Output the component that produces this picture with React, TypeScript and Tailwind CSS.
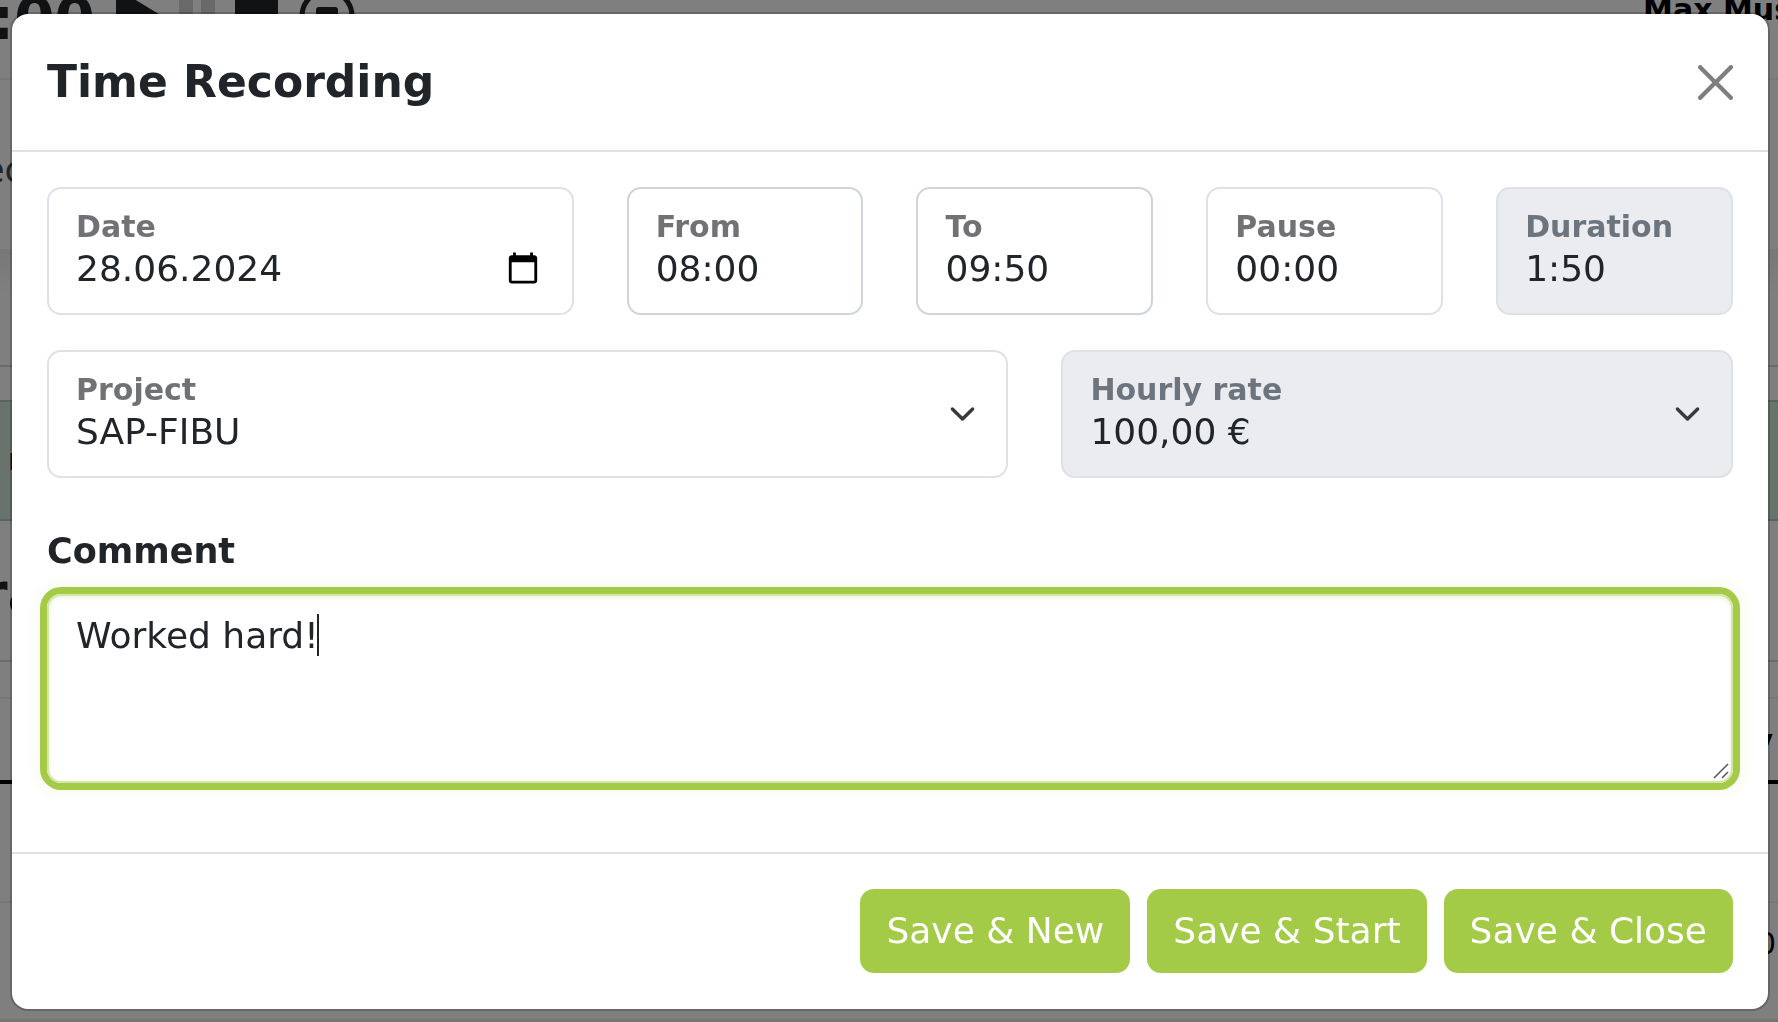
function CloseIcon() {
  return (
    <svg viewBox="0 0 16 16" className="size-[35px] fill-black opacity-50" aria-hidden="true">
      <path d="M.293.293a1 1 0 0 1 1.414 0L8 6.586 14.293.293a1 1 0 1 1 1.414 1.414L9.414 8l6.293 6.293a1 1 0 0 1-1.414 1.414L8 9.414l-6.293 6.293a1 1 0 0 1-1.414-1.414L6.586 8 .293 1.707a1 1 0 0 1 0-1.414z" />
    </svg>
  );
}

function CalendarIcon() {
  return (
    <svg viewBox="0 0 24 24" className="size-[34px] fill-black" aria-hidden="true">
      <path d="M20 3h-1V1h-2v2H7V1H5v2H4c-1.1 0-2 .9-2 2v16c0 1.1.9 2 2 2h16c1.1 0 2-.9 2-2V5c0-1.1-.9-2-2-2zm0 18H4V8h16v13z" />
    </svg>
  );
}

function Chevron() {
  return (
    <svg viewBox="0 0 16 16" className="pointer-events-none absolute top-1/2 right-[30px] size-[27px] -translate-y-1/2" aria-hidden="true">
      <path d="m2 5 6 6 6-6" fill="none" stroke="#343a40" strokeWidth="2" strokeLinecap="round" strokeLinejoin="round" />
    </svg>
  );
}

function TimerControls() {
  return (
    <svg viewBox="0 0 240 56" className="-mt-3 ml-[21px] h-14 w-[240px] shrink-0" aria-hidden="true">
      <path d="M0 0 46 28 0 56z" fill="#212529" />
      <path d="M63 0h14v56H63zM85 0h14v56H85z" fill="#d2d2d2" />
      <rect x="119" y="6" width="43" height="44" rx="6" fill="#212529" />
      <circle cx="211" cy="28" r="25" fill="none" stroke="#212529" strokeWidth="5" />
      <rect x="200" y="19" width="22" height="20" rx="3" fill="#212529" />
    </svg>
  );
}

/* The timesheet page that lies behind the dialog. */
function Timesheet() {
  return (
    <div className="h-screen overflow-hidden bg-white text-[#212529]" aria-hidden="true">
      <div className="flex h-20 items-start border-b-2 border-[#f0f0f0]">
        <span className="-mt-[15px] -ml-[9px] text-[58px] leading-[68px] font-bold">:00</span>
        <TimerControls />
        <span className="-mt-[10px] -mr-[14px] ml-auto text-[30px] leading-10 font-bold whitespace-nowrap text-black">Max Mus</span>
      </div>
      <div className="h-[169px] pt-[68px]">
        <div className="-ml-[17px] text-[35px] leading-[44px] text-[#404a54]">ec</div>
      </div>
      <div className="h-[118px] border-b-2 border-[#d6d6d6] bg-linear-to-b from-[#f0f0f0] to-white to-40%" />
      <div className="mt-[33px] h-[121px] border-y-2 border-[#a3cfbb] bg-[#d1e7dd] pt-[38px]">
        <div className="ml-2 text-[30px] leading-10 font-bold">m</div>
      </div>
      <div className="h-[141px] border-b-2 border-[#d6d6d6] pt-10">
        <div className="-ml-5 text-[56px] leading-[64px] font-bold">ra</div>
      </div>
      <div className="h-[37px] border-b-2 border-[#f0f0f0]" />
      <div className="h-[85px] border-b-4 border-black pt-[22px] pr-[5px] text-right text-[30px] leading-10 font-bold text-black">y</div>
      <div className="h-[119px] border-b-2 border-[#eeeeee]" />
      <div className="h-[119px] border-b-3 border-[#eaeaea] pt-[21px] pr-[2px] text-right text-[30px] leading-10 text-black">0</div>
    </div>
  );
}

type Kind = "plain" | "strong" | "muted";

const boxes: Record<Kind, string> = {
  plain: "border-[#dee2e6] bg-white",
  strong: "border-[#ced4da] bg-white",
  muted: "border-[#dee2e6] bg-[#eaecf0]",
};

const controlClass = "block w-full min-w-0 appearance-none bg-transparent px-[27px] pt-[58px] pb-[22px] text-[36px] leading-[44px] text-[#212529] outline-none";

function Field(props: { id: string; label: string; value: string; span: string; kind: Kind; select?: boolean; calendar?: boolean }) {
  const { id, label, value, span, kind, select, calendar } = props;
  return (
    <div className={`relative rounded-[14px] border-2 ${boxes[kind]} ${span}`}>
      <label htmlFor={id} className={`absolute top-5 left-[27px] text-[30px] leading-9 font-bold ${kind === "muted" ? "text-[#6c757d]" : "text-[#717275]"}`}>
        {label}
      </label>
      {select ? (
        <select id={id} defaultValue={value} className={controlClass}>
          <option>{value}</option>
        </select>
      ) : (
        <input id={id} type="text" defaultValue={value} readOnly={kind === "muted"} className={controlClass} />
      )}
      {select && <Chevron />}
      {calendar && (
        <button type="button" aria-label="Choose date" className="absolute right-8 bottom-7">
          <CalendarIcon />
        </button>
      )}
    </div>
  );
}

function SaveButton({ children }: { children: string }) {
  return (
    <button type="button" className="rounded-[14px] bg-[#a3cb48] px-[26px] py-5 text-[36px] leading-[44px] text-white">
      {children}
    </button>
  );
}

export default function App() {
  return (
    <div className="font-['Verdana','DejaVu_Sans',sans-serif]">
      <Timesheet />
      <div className="fixed inset-0 flex overflow-auto bg-black/50 pt-3 pr-2 pb-[11px] pl-[10px]">
        <div role="dialog" aria-label="Time Recording" className="flex w-full flex-col rounded-[18px] border-2 border-black/20 bg-white bg-clip-padding">
          <header className="flex items-center justify-between border-b-2 border-[#dee2e6] px-[35px] pt-9 pb-9">
            <h1 className="text-[44px] leading-[64px] font-bold text-[#212529]">Time Recording</h1>
            <button type="button" aria-label="Close">
              <CloseIcon />
            </button>
          </header>
          <div className="grid grid-cols-12 gap-x-[53px] gap-y-[35px] px-[35px] pt-[35px]">
            <Field id="date" label="Date" value="28.06.2024" span="col-span-4" kind="plain" calendar />
            <Field id="from" label="From" value="08:00" span="col-span-2" kind="strong" />
            <Field id="to" label="To" value="09:50" span="col-span-2" kind="strong" />
            <Field id="pause" label="Pause" value="00:00" span="col-span-2" kind="plain" />
            <Field id="duration" label="Duration" value="1:50" span="col-span-2" kind="muted" />
            <Field id="project" label="Project" value="SAP-FIBU" span="col-span-7" kind="plain" select />
            <Field id="rate" label="Hourly rate" value="100,00 €" span="col-span-5" kind="muted" select />
          </div>
          <div className="px-[35px] pt-[46px] pb-[69px]">
            <label htmlFor="comment" className="mb-4 block text-[35px] leading-[54px] font-bold text-[#212529]">
              Comment
            </label>
            <div className="relative">
              <textarea
                id="comment"
                defaultValue="Worked hard!"
                className="block h-[189px] w-full resize-none rounded-[14px] border-2 border-[#d3e5a8] px-[27px] py-[14px] text-[36px] leading-[52px] text-[#212529] caret-transparent shadow-[inset_0_2px_4px_rgba(163,203,72,0.2),0_0_0_7px_#a3cb48,0_0_16px_8px_rgba(163,203,72,0.12)] outline-none"
              />
              <span className="absolute top-5 left-[270px] h-[42px] w-0.5 bg-[#212529]" />
              <svg viewBox="0 0 16 16" className="pointer-events-none absolute right-1 bottom-1 size-4" aria-hidden="true">
                <path d="M1 15 15 1M9 15l6-6" fill="none" stroke="#555" strokeWidth="1.5" />
              </svg>
            </div>
          </div>
          <footer className="flex justify-end gap-[17px] border-t-2 border-[#dee2e6] p-[35px]">
            <SaveButton>Save &amp; New</SaveButton>
            <SaveButton>Save &amp; Start</SaveButton>
            <SaveButton>Save &amp; Close</SaveButton>
          </footer>
        </div>
      </div>
    </div>
  );
}
